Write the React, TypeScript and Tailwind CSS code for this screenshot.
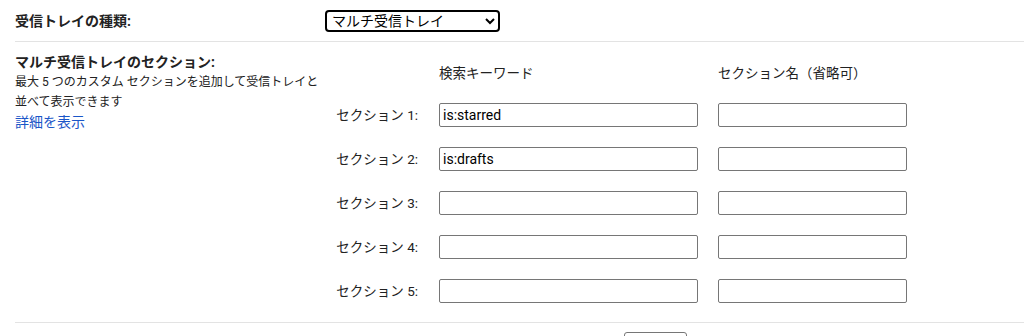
const FONT = "font-['Roboto','Noto_Sans_CJK_JP',sans-serif]";

const sections = [
  { label: "セクション 1:", query: "is:starred" },
  { label: "セクション 2:", query: "is:drafts" },
  { label: "セクション 3:", query: "" },
  { label: "セクション 4:", query: "" },
  { label: "セクション 5:", query: "" },
];

export default function App() {
  return (
    <div className={`${FONT} h-[336px] w-[1024px] overflow-hidden bg-white pl-[15px] text-[#222]`}>
      {/* inbox type */}
      <div className="flex h-[42px] items-center border-b border-[#e3e3e3]">
        <div className="w-[310px] text-[14px] font-bold leading-5">受信トレイの種類:</div>
        <select
          defaultValue="multi"
          className="h-[22px] w-[175px] rounded-[4px] border-2 border-black bg-white pl-[1px] text-[14px] leading-4 text-black"
        >
          <option value="default">デフォルト</option>
          <option value="multi">マルチ受信トレイ</option>
        </select>
      </div>

      {/* multi inbox sections */}
      <div className="flex border-b border-[#e3e3e3] pb-[19px]">
        <div className="w-[310px] pt-[10px]">
          <div className="text-[14px] font-bold leading-5">マルチ受信トレイのセクション:</div>
          <p className="text-[12px] leading-5">
            最大 5 つのカスタム セクションを追加して受信トレイと並べて表示できます
          </p>
          <a href="#" className="block text-[14px] leading-5 text-[#1a56c8]">
            詳細を表示
          </a>
        </div>

        <div className="pt-[21px]">
          <div className="flex text-[13.5px] leading-5">
            <div className="w-[114px]" />
            <div className="w-[279px]">検索キーワード</div>
            <div>セクション名（省略可）</div>
          </div>
          <div className="mt-[20px] flex flex-col gap-[20px]">
            {sections.map((s) => (
              <div key={s.label} className="flex items-center">
                <div className="w-[93px] text-right text-[13.5px]">{s.label}</div>
                <input
                  defaultValue={s.query}
                  className="ml-[21px] h-[24px] w-[259px] rounded-[2px] border border-[#767676] px-[3px] text-[14px] text-black"
                />
                <input className="ml-[20px] h-[24px] w-[189px] rounded-[2px] border border-[#767676] px-[3px] text-[14px]" />
              </div>
            ))}
          </div>
        </div>
      </div>

      <div className="pl-[609px] pt-[9px]">
        <button className="h-[24px] w-[63px] rounded-[3px] border border-[#767676] bg-white" />
      </div>
    </div>
  );
}
